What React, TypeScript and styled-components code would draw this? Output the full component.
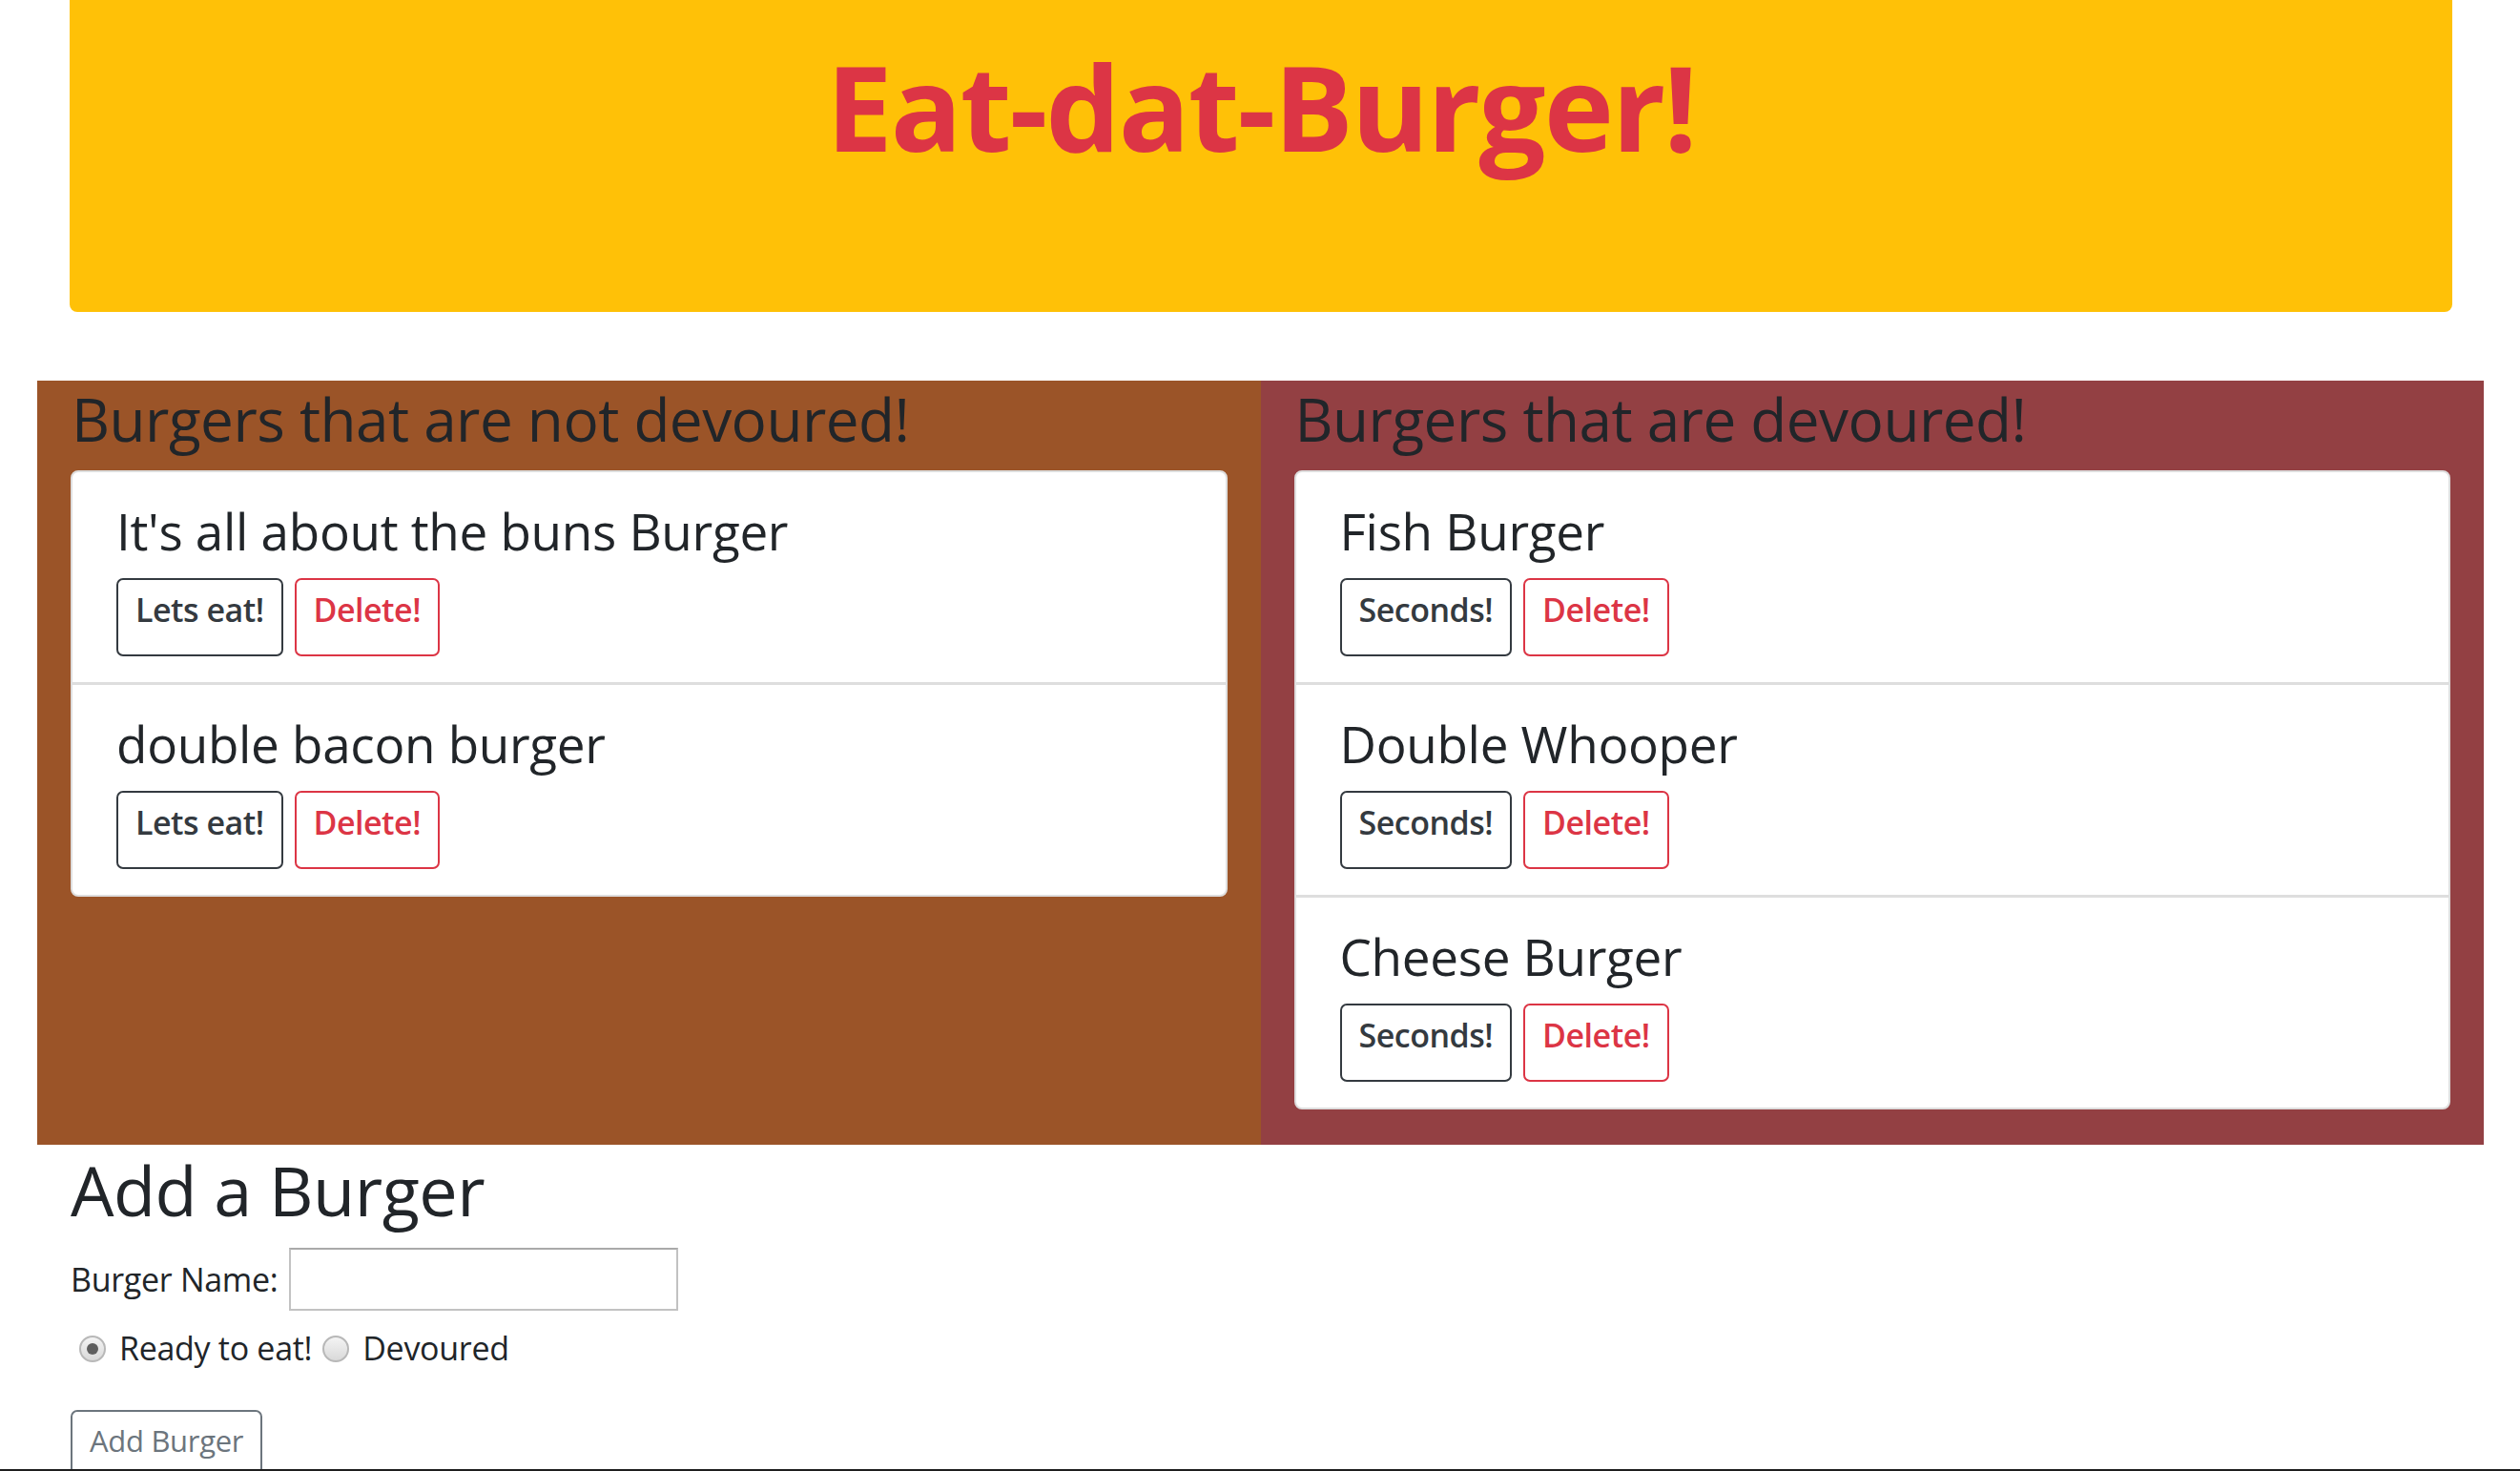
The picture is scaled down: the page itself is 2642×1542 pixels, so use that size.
import React from "react";
import styled, { createGlobalStyle } from "styled-components";

const Global = createGlobalStyle`
  html, body { margin: 0; padding: 0; background: #fff; }
  body { font-family: "Open Sans", "Noto Sans", sans-serif; color: #212529; }
  * { box-sizing: border-box; }
`;

const Page = styled.div`
  padding: 0 38px 0 39px;
`;

const Jumbotron = styled.header`
  margin: 0 33px 72px 34px;
  height: 327px;
  padding-top: 37px;
  background: #ffc107;
  border-radius: 0 0 8px 8px;
  text-align: center;
`;

const Title = styled.h1`
  margin: 0;
  font-size: 124px;
  line-height: 148px;
  font-weight: 700;
  color: #dc3545;
  letter-spacing: -2px;
`;

const Columns = styled.main`
  display: grid;
  grid-template-columns: 1fr 1fr;
`;

const Column = styled.section<{ $bg: string }>`
  background: ${(p) => p.$bg};
  padding: 3px 35px 37px 35px;
`;

const ColumnTitle = styled.h2`
  margin: 0 0 17px 1px;
  font-size: 62px;
  line-height: 74px;
  font-weight: 500;
  color: #212529;
  letter-spacing: -0.5px;
`;

const Card = styled.ul`
  list-style: none;
  margin: 0;
  padding: 0;
  background: #fff;
  border: 2px solid #dedede;
  border-radius: 8px;
  overflow: hidden;
`;

const Item = styled.li`
  padding: 31px 40px 27px 46px;
  & + & { border-top: 3px solid #dedede; }
`;

const ItemName = styled.h3`
  margin: 0 0 18px;
  font-size: 53px;
  line-height: 62px;
  font-weight: 400;
  color: #212529;
  letter-spacing: -0.3px;
`;

const Actions = styled.div`
  display: flex;
  gap: 12px;
`;

const ActionButton = styled.button<{ $tone: "dark" | "danger" }>`
  height: 82px;
  padding: 10px 18px 25px;
  background: #fff;
  border: 2px solid ${(p) => (p.$tone === "dark" ? "#343a40" : "#dc3545")};
  color: ${(p) => (p.$tone === "dark" ? "#343a40" : "#dc3545")};
  border-radius: 7px;
  font-family: inherit;
  font-size: 34px;
  line-height: 41px;
  font-weight: 600;
  letter-spacing: -0.5px;
  cursor: pointer;
`;

const Form = styled.form`
  margin-left: 35px;
`;

const FormTitle = styled.h2`
  margin: 5px 0 19px;
  font-size: 72px;
  line-height: 84px;
  font-weight: 500;
  color: #212529;
  letter-spacing: -0.5px;
`;

const FieldRow = styled.div`
  display: flex;
  align-items: center;
  gap: 12px;
`;

const Label = styled.label`
  font-size: 34px;
  line-height: 41px;
  letter-spacing: -0.3px;
`;

const TextInput = styled.input`
  width: 408px;
  height: 66px;
  border: 2px solid #c2c2c2;
  border-top-color: #a9a9a9;
  border-radius: 0;
  padding: 4px 8px;
  font-family: inherit;
  font-size: 30px;
`;

const RadioRow = styled.div`
  display: flex;
  align-items: center;
  margin-top: 19px;
  margin-left: 9px;
  height: 41px;
`;

const Radio = styled.input`
  appearance: none;
  width: 28px;
  height: 28px;
  margin: 0 14px 0 0;
  border-radius: 50%;
  border: 2px solid #b8b8b8;
  background: linear-gradient(#f4f4f4, #d9d9d9);
  display: grid;
  place-items: center;
  &:checked::after {
    content: "";
    width: 12px;
    height: 12px;
    border-radius: 50%;
    background: #5f5f5f;
  }
`;

const RadioLabel = styled.label`
  font-size: 34px;
  line-height: 41px;
  margin-right: 11px;
  letter-spacing: -0.3px;
`;

const SubmitButton = styled.button`
  margin-top: 44px;
  height: 70px;
  padding: 0 18px 6px;
  background: #fff;
  border: 2px solid #6c757d;
  border-radius: 7px;
  color: #6c757d;
  font-family: inherit;
  font-size: 31px;
  line-height: 37px;
  letter-spacing: -0.3px;
`;

const BottomEdge = styled.div`
  position: fixed;
  left: 0;
  right: 0;
  bottom: 0;
  height: 2px;
  background: #1e1e1e;
`;

const notDevoured = ["It's all about the buns Burger", "double bacon burger"];
const devoured = ["Fish Burger", "Double Whooper", "Cheese Burger"];

export default function App() {
  return (
    <>
      <Global />
      <Page>
        <Jumbotron>
          <Title>Eat-dat-Burger!</Title>
        </Jumbotron>
        <Columns>
          <Column $bg="#9b5428">
            <ColumnTitle>Burgers that are not devoured!</ColumnTitle>
            <Card>
              {notDevoured.map((name) => (
                <Item key={name}>
                  <ItemName>{name}</ItemName>
                  <Actions>
                    <ActionButton $tone="dark">Lets eat!</ActionButton>
                    <ActionButton $tone="danger">Delete!</ActionButton>
                  </Actions>
                </Item>
              ))}
            </Card>
          </Column>
          <Column $bg="#934043">
            <ColumnTitle>Burgers that are devoured!</ColumnTitle>
            <Card>
              {devoured.map((name) => (
                <Item key={name}>
                  <ItemName>{name}</ItemName>
                  <Actions>
                    <ActionButton $tone="dark">Seconds!</ActionButton>
                    <ActionButton $tone="danger">Delete!</ActionButton>
                  </Actions>
                </Item>
              ))}
            </Card>
          </Column>
        </Columns>
        <Form onSubmit={(e) => e.preventDefault()}>
          <FormTitle>Add a Burger</FormTitle>
          <FieldRow>
            <Label htmlFor="burger-name">Burger Name:</Label>
            <TextInput id="burger-name" type="text" />
          </FieldRow>
          <RadioRow>
            <Radio type="radio" id="ready" name="devoured" defaultChecked />
            <RadioLabel htmlFor="ready">Ready to eat!</RadioLabel>
            <Radio type="radio" id="dev" name="devoured" />
            <RadioLabel htmlFor="dev">Devoured</RadioLabel>
          </RadioRow>
          <SubmitButton type="submit">Add Burger</SubmitButton>
        </Form>
      </Page>
      <BottomEdge />
    </>
  );
}
